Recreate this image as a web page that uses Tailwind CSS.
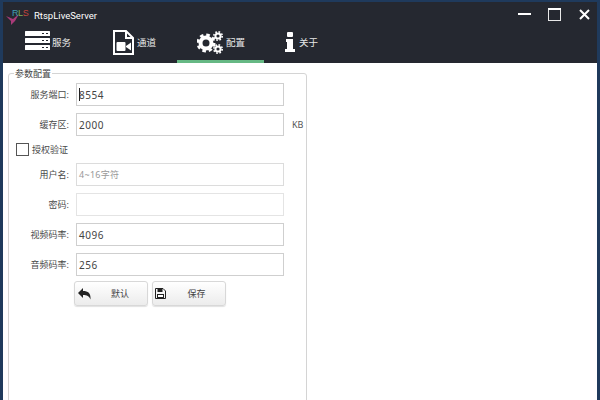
<!DOCTYPE html>
<html lang="zh">
<head>
<meta charset="utf-8">
<script src="https://cdn.jsdelivr.net/npm/@tailwindcss/browser@4"></script>
</head>
<body class="m-0 overflow-hidden bg-white">
<div class="w-[600px] h-[400px] flex flex-col overflow-hidden border-l-[3px] border-r-[3px] border-t-[2px] border-[#1f3a5c] font-['Noto_Sans','Noto_Sans_CJK_SC',sans-serif]">
  <header class="h-[61px] shrink-0 bg-[#252830] flex flex-col text-white">
    <div class="h-[28px] flex items-start shrink-0">
      <div class="relative w-[24px] h-[20px] ml-[2px] mt-[5px]">
        <svg class="absolute left-0 top-[6px]" width="15" height="13" viewBox="0 0 15 13"><path d="M1 3 L8 6 L14 1 L10 8 L6 12 L6 8 Z" fill="#a83a78"/></svg>
        <span class="absolute left-[7px] top-[0px] text-[9px] leading-[12px] tracking-[-0.4px] font-['Liberation_Sans',sans-serif] whitespace-nowrap"><span class="text-[#3f9fb5]">R</span><span class="text-[#7fae55]">L</span><span class="text-[#c8453c]">S</span></span>
      </div>
      <span class="ml-[5px] mt-[7px] font-['Roboto',sans-serif] text-[9.5px] leading-[14px] text-white">RtspLiveServer</span>
      <div class="ml-auto flex items-start">
        <svg width="13" height="2" viewBox="0 0 13 2" class="mt-[11px] mr-[17px]"><rect x="0" y="0" width="13" height="2" fill="#fff"/></svg>
        <svg width="13" height="13" viewBox="0 0 13 13" class="mt-[6px] mr-[18px]"><rect x="0.5" y="0.5" width="12" height="12" fill="none" stroke="#e8e8e8"/><rect x="0" y="0" width="13" height="2" fill="#fff"/></svg>
        <svg width="11" height="11" viewBox="0 0 11 11" class="mt-[7px] mr-[7px]"><path d="M1 1 L10 10 M10 1 L1 10" stroke="#fff" stroke-width="2"/></svg>
      </div>
    </div>
    <nav class="h-[33px] flex shrink-0 text-[9.5px] leading-[12px] text-[#e8e8e8]">
      <div class="w-[87px] flex items-start pl-[22px] gap-[2px]">
        <svg width="26" height="21" viewBox="0 0 26 21"><g fill="#fff"><rect x="0" y="1" width="25" height="5" rx="0.5"/><rect x="0" y="8" width="25" height="5" rx="0.5"/><rect x="0" y="15" width="25" height="5" rx="0.5"/></g><g fill="#252830"><rect x="17" y="3" width="2" height="1"/><rect x="21" y="3" width="2" height="1"/><rect x="17" y="10" width="2" height="1"/><rect x="21" y="10" width="2" height="1"/><rect x="17" y="17" width="2" height="1"/><rect x="21" y="17" width="2" height="1"/></g></svg>
        <span class="mt-[7px] ml-[-1px]">服务</span>
      </div>
      <div class="w-[87px] flex items-start pl-[23px] gap-[3px]">
        <svg width="21" height="25" viewBox="0 0 21 25"><path d="M2 1 H13 L20 8 V24 H1 V1 Z" fill="none" stroke="#fff" stroke-width="2"/><path d="M13 1 V8 H20" fill="none" stroke="#fff" stroke-width="2"/><rect x="3.5" y="12" width="9" height="9" rx="1" fill="#fff"/><path d="M13 16 L18 12.5 V20.5 L13 17 Z" fill="#fff"/></svg>
        <span class="mt-[7px]">通道</span>
      </div>
      <div class="w-[87px] flex flex-col">
        <div class="flex-1 flex items-start pl-[20px] gap-[3px]">
          <svg width="26" height="23" viewBox="0 0 26 23" class="mt-[1px]"><g fill="none" stroke="#fff"><circle cx="9" cy="12" r="5.5" stroke-width="4"/><circle cx="9" cy="12" r="8.2" stroke-width="2.6" stroke-dasharray="3.6 2.84"/><circle cx="21" cy="5" r="2.6" stroke-width="2"/><circle cx="21" cy="5" r="4.2" stroke-width="1.6" stroke-dasharray="1.7 1.6"/><circle cx="21" cy="18" r="2.6" stroke-width="2"/><circle cx="21" cy="18" r="4.2" stroke-width="1.6" stroke-dasharray="1.7 1.6"/></g></svg>
          <span class="mt-[7px]">配置</span>
        </div>
        <div class="h-[3px] bg-[#66b884] shrink-0"></div>
      </div>
      <div class="flex items-start pl-[21px] gap-[4px]">
        <svg width="10" height="20" viewBox="0 0 10 20" class="mt-[2px]"><g fill="#fff"><rect x="2" y="0" width="6" height="5" rx="1"/><path d="M1 7 H8 V17 H10 V20 H0 V17 H2 V10 H1 Z"/></g></svg>
        <span class="mt-[7px]">关于</span>
      </div>
    </nav>
  </header>
  <main class="flex-1 bg-white pl-[5px] pt-[10px] text-[#4a4a4a] text-[9px] leading-[14px]">
    <section class="relative w-[299px] h-[340px] border border-[#d4d4d4] rounded-[3px] pl-[7px] pt-[9px]">
      <span class="absolute left-[5px] top-[-7px] bg-white px-[1px] text-[#444]">参数配置</span>
      <div class="flex flex-col gap-[7px] mb-[5px]">
        <div class="flex items-center h-[23px]">
          <label class="w-[53px] text-right">服务端口:</label>
          <div class="relative w-[208px] h-[23px] ml-[7px] border border-[#cfcfcf] px-[2px] text-[10px] text-[#444] flex items-center tracking-[0.5px]">8554<span class="absolute left-[2px] top-[4px] w-px h-[13px] bg-[#222]"></span></div>
        </div>
        <div class="flex items-center h-[23px]">
          <label class="w-[53px] text-right">缓存区:</label>
          <div class="w-[208px] h-[23px] ml-[7px] border border-[#cfcfcf] px-[2px] text-[10px] text-[#444] flex items-center tracking-[0.5px]">2000</div>
          <span class="ml-[8px] text-[#555]">KB</span>
        </div>
        <div class="flex items-center h-[13px]">
          <span class="w-[13px] h-[13px] border border-[#555] bg-white shrink-0"></span>
          <span class="ml-[3px]">授权验证</span>
        </div>
        <div class="flex items-center h-[23px]">
          <label class="w-[53px] text-right">用户名:</label>
          <div class="w-[208px] h-[23px] ml-[7px] border border-[#dcdcdc] px-[2px] text-[#999] flex items-center tracking-[0.3px]">4~16字符</div>
        </div>
        <div class="flex items-center h-[23px]">
          <label class="w-[53px] text-right">密码:</label>
          <div class="w-[208px] h-[23px] ml-[7px] border border-[#e4e4e4]"></div>
        </div>
        <div class="flex items-center h-[23px]">
          <label class="w-[53px] text-right">视频码率:</label>
          <div class="w-[208px] h-[23px] ml-[7px] border border-[#cfcfcf] px-[2px] text-[10px] text-[#444] flex items-center tracking-[0.5px]">4096</div>
        </div>
        <div class="flex items-center h-[23px]">
          <label class="w-[53px] text-right">音频码率:</label>
          <div class="w-[208px] h-[23px] ml-[7px] border border-[#cfcfcf] px-[2px] text-[10px] text-[#444] flex items-center tracking-[0.5px]">256</div>
        </div>
      </div>
      <div class="flex gap-[4px] ml-[58px] text-[#444] text-[9px]">
        <button class="relative w-[74px] h-[25px] rounded-[3px] border border-[#d8d8d8] bg-linear-to-b from-white to-[#ececec] shadow-[0_1px_1px_rgba(0,0,0,0.12)] flex items-center justify-center pl-[18px]">
          <svg class="absolute left-[3px] top-[6px]" width="13" height="12" viewBox="0 0 13 12"><path d="M5 0 V3 C10 3 13 5 12.5 11.5 C11 8 9 7 5 7 V10 L0 5 Z" fill="#222"/></svg>
          <span>默认</span>
        </button>
        <button class="relative w-[74px] h-[25px] rounded-[3px] border border-[#d8d8d8] bg-linear-to-b from-white to-[#ececec] shadow-[0_1px_1px_rgba(0,0,0,0.12)] flex items-center justify-center pl-[15px]">
          <svg class="absolute left-[2px] top-[6px]" width="11" height="11" viewBox="0 0 11 11"><path d="M0.5 0.5 H8 L10.5 3 V10.5 H0.5 Z" fill="none" stroke="#222"/><rect x="2.5" y="1" width="5" height="3" fill="#222"/><rect x="2" y="6" width="7" height="4.5" fill="#222"/><rect x="3" y="7" width="5" height="2" fill="#fff"/></svg>
          <span>保存</span>
        </button>
      </div>
    </section>
  </main>
</div>
</body>
</html>
